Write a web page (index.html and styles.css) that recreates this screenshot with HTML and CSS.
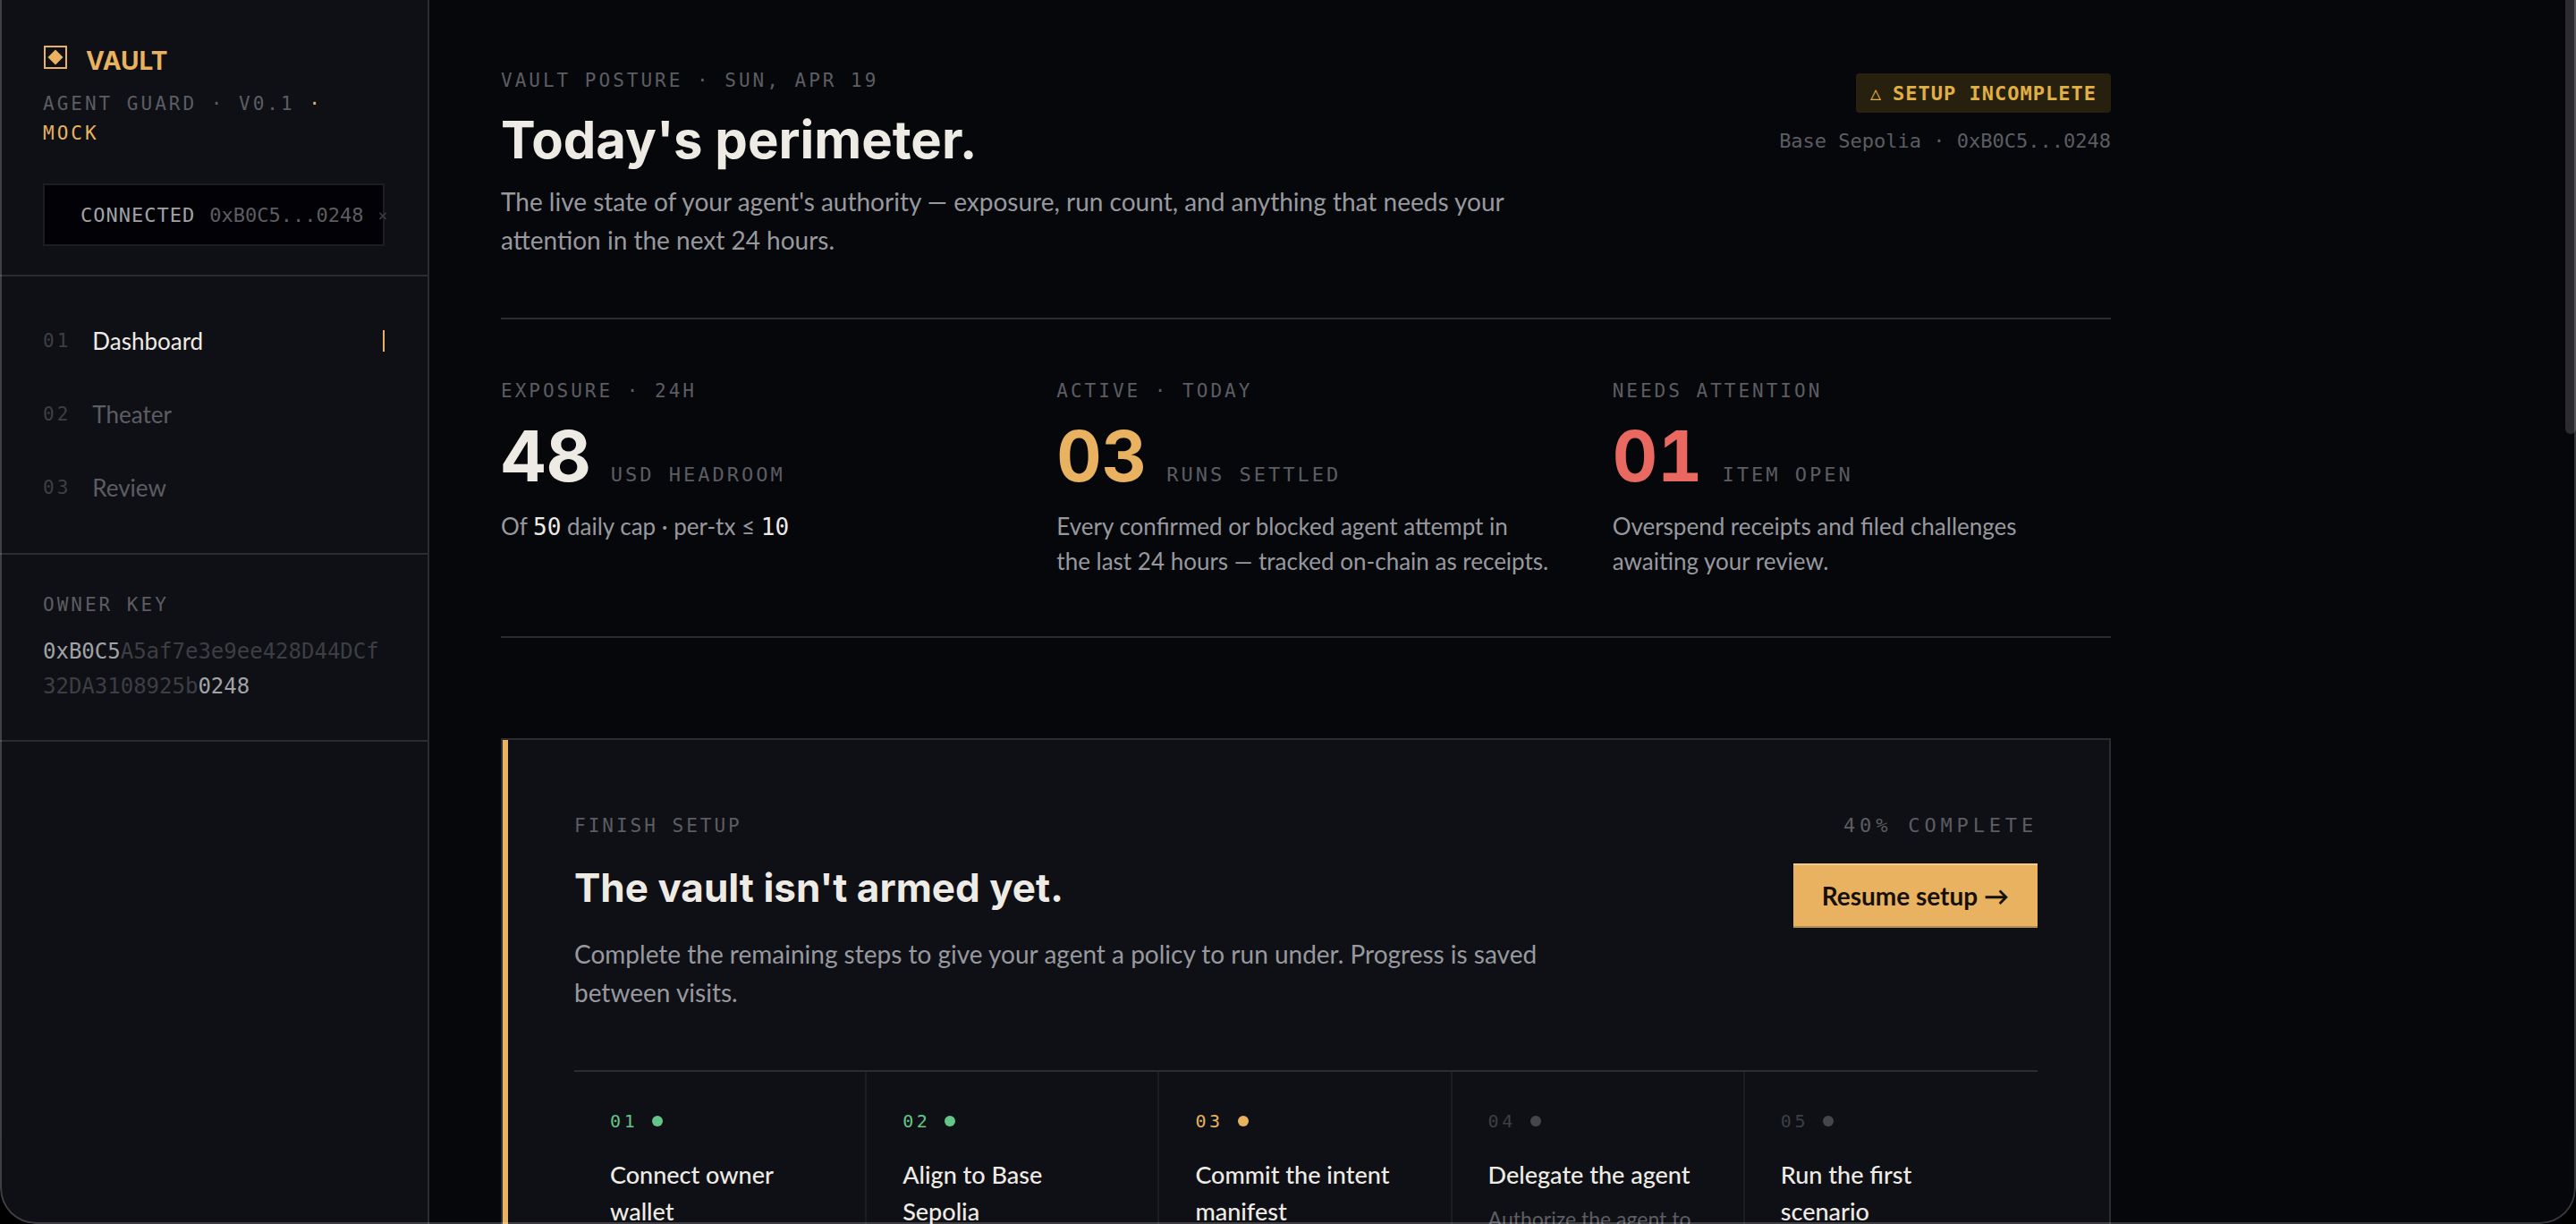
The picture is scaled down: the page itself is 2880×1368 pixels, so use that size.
FILE: index.html
```
<!DOCTYPE html>
<html lang="en">
<head>
    <meta charset="UTF-8">
    <meta name="viewport" content="width=device-width, initial-scale=1.0">
    <title>Vault - Dashboard</title>
    <link rel="stylesheet" href="styles.css">
</head>
<body>
<div class="app">
    <aside class="sidebar">
        <div class="brand">
            <div class="brand-name">
                <svg class="logo" viewBox="0 0 28 28" aria-hidden="true">
                    <rect x="2" y="2" width="24" height="24" fill="none" stroke="#e8b260" stroke-width="2"/>
                    <path d="M14 5.5 L22.5 14 L14 22.5 L5.5 14 Z" fill="#e8b260"/>
                </svg>
                <span>VAULT</span>
            </div>
            <div class="label brand-sub">AGENT GUARD · V0.1 <span class="amber">· MOCK</span></div>
            <div class="wallet">
                <span class="wallet-state">CONNECTED</span>
                <span class="wallet-address">0xB0C5...0248</span>
                <button class="wallet-close" type="button" aria-label="Disconnect">×</button>
            </div>
        </div>

        <nav class="nav">
            <a class="nav-item active" href="#dashboard"><span class="nav-num">01</span>Dashboard</a>
            <a class="nav-item" href="#theater"><span class="nav-num">02</span>Theater</a>
            <a class="nav-item" href="#review"><span class="nav-num">03</span>Review</a>
        </nav>

        <div class="owner">
            <div class="label">OWNER KEY</div>
            <div class="owner-key"><b>0xB0C5</b>A5af7e3e9ee428D44DCf32DA3108925b<b>0248</b></div>
        </div>
    </aside>

    <main class="main">
        <div class="content">
            <header class="header">
                <div>
                    <div class="label">VAULT POSTURE · SUN, APR 19</div>
                    <h1>Today's perimeter.</h1>
                    <p class="lead">The live state of your agent's authority — exposure, run count, and anything that needs your attention in the next 24 hours.</p>
                </div>
                <div class="header-side">
                    <div class="badge"><span class="badge-icon">△</span>SETUP INCOMPLETE</div>
                    <div class="network">Base Sepolia · 0xB0C5...0248</div>
                </div>
            </header>

            <section class="stats">
                <div class="stat">
                    <div class="label">EXPOSURE · 24H</div>
                    <div class="stat-value"><strong>48</strong><span>USD HEADROOM</span></div>
                    <p>Of <b>50</b> daily cap · per-tx ≤ <b>10</b></p>
                </div>
                <div class="stat">
                    <div class="label">ACTIVE · TODAY</div>
                    <div class="stat-value"><strong class="amber">03</strong><span>RUNS SETTLED</span></div>
                    <p>Every confirmed or blocked agent attempt in<br>the last 24 hours — tracked on-chain as receipts.</p>
                </div>
                <div class="stat">
                    <div class="label">NEEDS ATTENTION</div>
                    <div class="stat-value"><strong class="red">01</strong><span>ITEM OPEN</span></div>
                    <p>Overspend receipts and filed challenges<br>awaiting your review.</p>
                </div>
            </section>

            <section class="panel">
                <div class="panel-head">
                    <div>
                        <div class="label">FINISH SETUP</div>
                        <h2>The vault isn't armed yet.</h2>
                        <p class="lead">Complete the remaining steps to give your agent a policy to run under. Progress is saved between visits.</p>
                    </div>
                    <div class="panel-side">
                        <div class="progress">40% COMPLETE</div>
                        <button class="resume" type="button">Resume setup →</button>
                    </div>
                </div>
                <div class="steps">
                    <div class="step done">
                        <div class="step-num">01<i class="dot"></i></div>
                        <h3>Connect owner wallet</h3>
                    </div>
                    <div class="step done">
                        <div class="step-num">02<i class="dot"></i></div>
                        <h3>Align to Base Sepolia</h3>
                    </div>
                    <div class="step current">
                        <div class="step-num">03<i class="dot"></i></div>
                        <h3>Commit the intent manifest</h3>
                    </div>
                    <div class="step">
                        <div class="step-num">04<i class="dot"></i></div>
                        <h3>Delegate the agent</h3>
                        <p>Authorize the agent to</p>
                    </div>
                    <div class="step">
                        <div class="step-num">05<i class="dot"></i></div>
                        <h3>Run the first scenario</h3>
                    </div>
                </div>
            </section>
        </div>
        <div class="scroll-thumb"></div>
    </main>
</div>
</body>
</html>
```
FILE: styles.css
```
:root {
    --bg: #06070b;
    --panel: #0f1015;
    --line: #2b2c30;
    --line-soft: #1c1d22;
    --text: #eeebe5;
    --muted: #97999e;
    --dim: #5c5d62;
    --faint: #3d3e43;
    --amber: #e8b260;
    --red: #e96860;
    --green: #63c587;
    --sans: Lato, sans-serif;
    --display: Inter, sans-serif;
    --mono: "DejaVu Sans Mono", monospace;
}
* {
    box-sizing: border-box;
}
body {
    margin: 0;
    background: #000;
    color: var(--text);
    font-family: var(--sans);
}
h1, h2, h3, p {
    margin: 0;
}
.app {
    position: relative;
    display: flex;
    height: 100vh;
    overflow: hidden;
    background: var(--bg);
    border-radius: 0 0 40px 40px;
}
/* window frame */
.app::after {
    content: "";
    position: absolute;
    inset: 0;
    border: 2px solid rgba(255, 255, 255, 0.2);
    border-top: 0;
    border-radius: 0 0 40px 40px;
    pointer-events: none;
}
.amber {
    color: var(--amber);
}
.red {
    color: var(--red);
}
.label {
    font-family: var(--mono);
    font-size: 21px;
    line-height: 24px;
    letter-spacing: 3px;
    color: var(--dim);
}
.lead {
    font-size: 28px;
    line-height: 43px;
    color: var(--muted);
}

/* sidebar */
.sidebar {
    flex: 0 0 480px;
    min-width: 0;
    background: var(--panel);
    border-right: 2px solid var(--line);
}
.brand {
    padding: 50px 48px 32px;
    border-bottom: 2px solid var(--line);
}
.brand-name {
    display: flex;
    gap: 20px;
    font-family: var(--display);
    font-size: 28px;
    font-weight: 700;
    line-height: 36px;
    color: var(--amber);
}
.logo {
    width: 28px;
    height: 28px;
}
.brand-sub {
    margin-top: 14px;
    line-height: 33px;
}
.wallet {
    display: flex;
    align-items: center;
    gap: 16px;
    height: 70px;
    margin-top: 39px;
    padding-left: 40px;
    background: #020206;
    border: 2px solid var(--line-soft);
    font-family: var(--mono);
    font-size: 22px;
    color: var(--dim);
    white-space: nowrap;
}
.wallet-state {
    letter-spacing: 1px;
    color: #a0a2a8;
}
.wallet-close {
    padding: 0;
    border: 0;
    background: none;
    font-family: var(--mono);
    font-size: 18px;
    color: var(--faint);
}
.nav {
    padding: 31px 48px 32px;
    border-bottom: 2px solid var(--line);
}
.nav-item {
    display: flex;
    align-items: center;
    gap: 24px;
    height: 82px;
    font-size: 26px;
    color: var(--dim);
    text-decoration: none;
}
.nav-num {
    font-family: var(--mono);
    font-size: 21px;
    letter-spacing: 3px;
    color: var(--faint);
}
.nav-item.active {
    color: var(--text);
}
.nav-item.active::after {
    content: "";
    width: 2px;
    height: 24px;
    margin-left: auto;
    background: var(--amber);
}
.owner {
    padding: 44px 48px 40px;
    border-bottom: 2px solid var(--line);
}
.owner-key {
    margin-top: 21px;
    font-family: var(--mono);
    font-size: 24px;
    line-height: 39px;
    color: var(--faint);
    word-break: break-all;
}
.owner-key b {
    font-weight: normal;
    color: #a0a3a6;
}

/* main column */
.main {
    position: relative;
    flex: 1;
    min-width: 0;
    padding: 78px 80px 0;
}
.content {
    max-width: 1800px;
}
.header {
    display: flex;
    justify-content: space-between;
    padding-bottom: 65px;
    border-bottom: 2px solid var(--line);
}
.header .lead {
    max-width: 1160px;
}
h1 {
    margin: 24px 0 18px;
    font-family: var(--display);
    font-size: 58px;
    font-weight: 700;
    line-height: 60px;
}
.header-side {
    display: flex;
    flex-direction: column;
    align-items: flex-end;
    gap: 18px;
    padding-top: 4px;
}
.badge {
    display: flex;
    align-items: center;
    gap: 12px;
    height: 44px;
    padding: 0 16px;
    background: #28200f;
    border-radius: 4px;
    font-family: var(--mono);
    font-size: 22px;
    font-weight: bold;
    letter-spacing: 1px;
    color: #e0b045;
}
.badge-icon {
    font-size: 20px;
    font-weight: normal;
}
.network {
    font-family: var(--mono);
    font-size: 22px;
    line-height: 28px;
    color: var(--dim);
}
.stats {
    display: grid;
    grid-template-columns: repeat(3, 1fr);
    gap: 64px;
    padding: 68px 0 64px;
    border-bottom: 2px solid var(--line);
}
.stat-value {
    display: flex;
    align-items: baseline;
    gap: 22px;
    margin: 21px 0 19px;
    line-height: 80px;
}
.stat-value strong {
    font-family: var(--display);
    font-size: 78px;
    font-weight: 700;
    font-variant-numeric: tabular-nums;
}
.stat-value span {
    font-family: var(--mono);
    font-size: 22px;
    line-height: 24px;
    letter-spacing: 3px;
    color: var(--dim);
}
.stat p {
    font-size: 26px;
    line-height: 39px;
    color: var(--muted);
    white-space: nowrap;
}
.stat b {
    font-family: var(--mono);
    font-size: 26px;
    font-weight: normal;
    line-height: 24px;
    color: var(--text);
}

/* setup panel */
.panel {
    margin-top: 112px;
    padding: 84px 80px 80px;
    background: var(--panel);
    border: 2px solid var(--line);
    box-shadow: inset 6px 0 var(--amber);
}
.panel-head {
    display: flex;
    justify-content: space-between;
    padding-bottom: 65px;
    border-bottom: 2px solid var(--line);
}
.panel .lead {
    max-width: 1120px;
}
h2 {
    margin: 30px 0 26px;
    font-family: var(--display);
    font-size: 44px;
    font-weight: 700;
    line-height: 54px;
}
.panel-side {
    display: flex;
    flex-direction: column;
    align-items: flex-end;
    gap: 30px;
}
.progress {
    font-family: var(--mono);
    font-size: 22px;
    line-height: 24px;
    letter-spacing: 0.22em;
    color: var(--dim);
}
.resume {
    height: 72px;
    padding: 0 32px;
    border: 0;
    border-top: 2px solid #f3cb8c;
    border-bottom: 2px solid #b88e4d;
    background: var(--amber);
    font-family: var(--sans);
    font-size: 28px;
    font-weight: 700;
    color: #15100a;
}
.steps {
    display: grid;
    grid-template-columns: repeat(5, 1fr);
}
.step {
    padding: 40px 40px 0;
    border-right: 2px solid var(--line-soft);
}
.step:last-child {
    border-right: 0;
}
.step-num {
    display: flex;
    align-items: center;
    gap: 16px;
    font-family: var(--mono);
    font-size: 20px;
    line-height: 30px;
    letter-spacing: 0.18em;
    color: var(--faint);
}
.dot {
    width: 12px;
    height: 12px;
    border-radius: 50%;
    background: #44464c;
}
.done .step-num {
    color: var(--green);
}
.current .step-num {
    color: var(--amber);
}
.done .dot,
.current .dot {
    background: currentColor;
}
h3 {
    margin-top: 24px;
    font-size: 27px;
    font-weight: 500;
    line-height: 41px;
}
.step p {
    margin-top: 11px;
    font-size: 23px;
    line-height: 36px;
    color: var(--dim);
    white-space: nowrap;
}

.scroll-thumb {
    position: absolute;
    top: 0;
    right: 0;
    width: 12px;
    height: 485px;
    background: #2c2c30;
    border-radius: 0 0 6px 6px;
}
```
